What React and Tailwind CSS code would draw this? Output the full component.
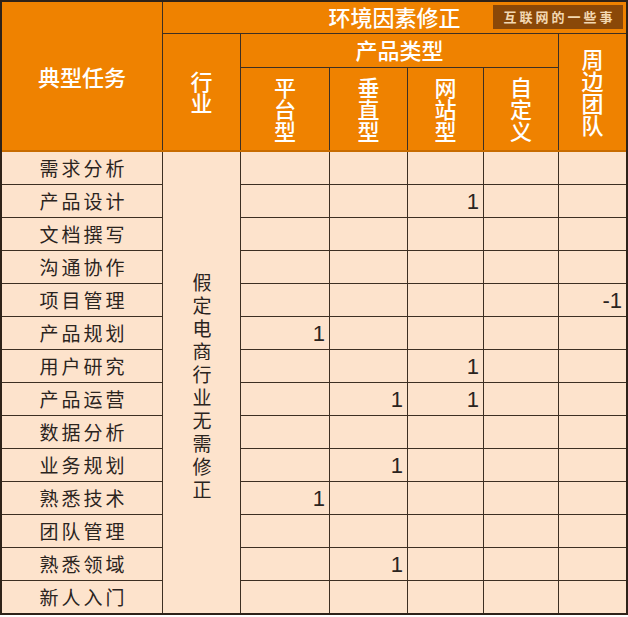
const cols = 'grid-cols-[160px_77px_88px_77px_75px_74px_67px]';

const tasks = [
  { name: '需求分析', vals: {} },
  { name: '产品设计', vals: { web: '1' } },
  { name: '文档撰写', vals: {} },
  { name: '沟通协作', vals: {} },
  { name: '项目管理', vals: { team: '-1' } },
  { name: '产品规划', vals: { platform: '1' } },
  { name: '用户研究', vals: { web: '1' } },
  { name: '产品运营', vals: { vertical: '1', web: '1' } },
  { name: '数据分析', vals: {} },
  { name: '业务规划', vals: { vertical: '1' } },
  { name: '熟悉技术', vals: { platform: '1' } },
  { name: '团队管理', vals: {} },
  { name: '熟悉领域', vals: { vertical: '1' } },
  { name: '新人入门', vals: {} },
];

const dataKeys = ['platform', 'vertical', 'web', 'custom', 'team'];

// vertical text, one column of upright characters
function VText({ text, className = '' }) {
  return <div className={`[writing-mode:vertical-rl] ${className}`}>{text}</div>;
}

function HeadCell({ className = '', children }) {
  return (
    <div className={`bg-[#ef8200] text-white flex items-center justify-center ${className}`}>
      {children}
    </div>
  );
}

export default function App() {
  return (
    <div className="w-[628px] h-[617px] bg-white font-['Noto_Sans_CJK_SC',sans-serif]">
      <div className="relative w-[628px] border-2 border-[#2e2218] bg-[#3d2f22]">
        {/* header */}
        <div className={`grid ${cols} grid-rows-[31px_33px_82px] gap-px`}>
          <HeadCell className="row-span-3 text-[22px] font-medium">典型任务</HeadCell>
          <HeadCell className="col-span-6 text-[22px] font-medium pb-[2px]">环境因素修正</HeadCell>
          <HeadCell className="row-span-2 text-[22px] font-medium">
            <VText text="行业" className="leading-[26px] pt-[2px]" />
          </HeadCell>
          <HeadCell className="col-span-4 text-[22px] font-medium pb-[2px]">产品类型</HeadCell>
          <HeadCell className="row-span-2 text-[22px] font-medium">
            <VText text="周边团队" className="leading-[26px] pt-[2px]" />
          </HeadCell>
          {['平台型', '垂直型', '网站型', '自定义'].map((t) => (
            <HeadCell key={t} className="text-[22px] font-medium">
              <VText text={t} className="leading-[26px] pt-[2px]" />
            </HeadCell>
          ))}
        </div>

        <div className="h-[2px] bg-[#c86c00]" />

        {/* body */}
        <div className={`grid ${cols} auto-rows-[32px] gap-px text-[#2b241e]`}>
          {tasks.map((t, r) => (
            <div key={t.name} className="contents">
              <div className="bg-[#fde3cc] flex items-center justify-center text-[19px] tracking-[3px] pl-[3px]">
                {t.name}
              </div>
              {r === 0 && (
                <div className="row-span-14 bg-[#fde3cc] flex items-center justify-center text-[19px] pt-[10px]">
                  <VText text="假定电商行业无需修正" className="tracking-[4px] leading-[26px]" />
                </div>
              )}
              {dataKeys.map((k) => (
                <div
                  key={k}
                  className="bg-[#fde3cc] flex items-center justify-end pr-[4px] text-[22px] font-['Liberation_Sans',Arial,sans-serif]"
                >
                  {t.vals[k] || ''}
                </div>
              ))}
            </div>
          ))}
        </div>

        {/* watermark */}
        <div className="absolute left-[491px] top-[3px] w-[130px] h-[24px] bg-[#8a4808] flex items-center justify-center text-[13px] font-bold tracking-[3px] text-[#f3d8b2] pl-[3px]">
          互联网的一些事
        </div>
      </div>
    </div>
  );
}
